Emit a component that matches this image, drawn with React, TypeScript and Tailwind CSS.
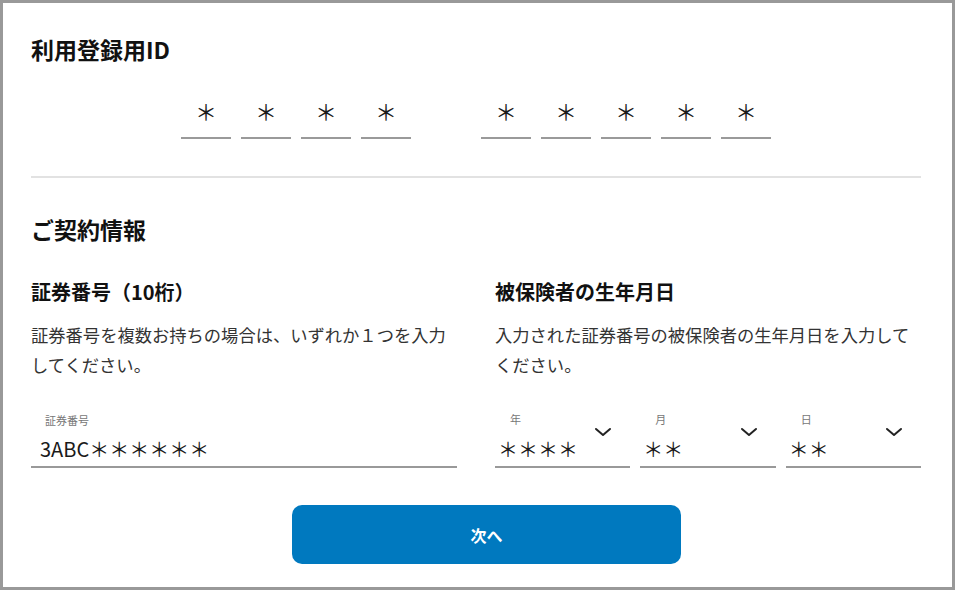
import React from "react";

const font = { fontFamily: '"Noto Sans CJK JP", "Noto Sans", sans-serif' };

function Chevron() {
  return (
    <svg width="18" height="10" viewBox="0 0 18 10" className="absolute right-[18px] top-[17px]">
      <polyline points="2,2 9,8 16,2" fill="none" stroke="#222" strokeWidth="2" strokeLinecap="round" strokeLinejoin="round" />
    </svg>
  );
}

function Box() {
  return (
    <div className="w-[50px] h-[51px] border-b-2 border-[#9a9a9a] flex items-start justify-center pt-[2px] text-[22px] leading-[40px] text-[#1a1a1a]">
      ＊
    </div>
  );
}

function Select({ label, value }: { label: string; value: string }) {
  return (
    <div className="relative flex-1 border-b-2 border-[#999] pb-[2px]">
      <div className="pl-[15px] pt-[1px] text-[11px] leading-[16px] text-[#777]">{label}</div>
      <div className="pl-[3px] mt-[7px] text-[20px] leading-[30px] text-[#1a1a1a]">{value}</div>
      <Chevron />
    </div>
  );
}

export default function App() {
  return (
    <div style={font} className="w-[955px] h-[590px] border-[3px] border-[#999] bg-white overflow-hidden">
      <div className="pl-[28px] pr-[31px] pt-[30px] flex flex-col">
        <div className="text-[23px] leading-[32px] font-bold text-[#111]">利用登録用ID</div>
        <div className="mt-[23px] flex justify-center gap-[70px]">
          <div className="flex gap-[10px]">
            <Box /><Box /><Box /><Box />
          </div>
          <div className="flex gap-[10px]">
            <Box /><Box /><Box /><Box /><Box />
          </div>
        </div>
        <div className="mt-[37px] h-[2px] bg-[#e2e2e2]" />
        <div className="mt-[35px] text-[23px] leading-[32px] font-bold text-[#111]">ご契約情報</div>
        <div className="mt-[33px] grid grid-cols-2 gap-[38px]">
          <div className="flex flex-col">
            <div className="text-[20px] leading-[28px] font-bold text-[#111]">証券番号（10桁）</div>
            <div className="mt-[14px] text-[17.3px] leading-[30px] text-[#333]">
              証券番号を複数お持ちの場合は、いずれか１つを入力
              <br />
              してください。
            </div>
            <div className="mt-[30px] border-b-2 border-[#999] pb-[2px]">
              <div className="pl-[14px] pt-[2px] text-[11px] leading-[16px] text-[#777]">証券番号</div>
              <div className="pl-[9px] mt-[6px] text-[20px] leading-[30px] text-[#1a1a1a]">3ABC＊＊＊＊＊＊</div>
            </div>
          </div>
          <div className="flex flex-col">
            <div className="text-[20px] leading-[28px] font-bold text-[#111]">被保険者の生年月日</div>
            <div className="mt-[14px] text-[17.3px] leading-[30px] text-[#333]">
              入力された証券番号の被保険者の生年月日を入力して
              <br />
              ください。
            </div>
            <div className="mt-[30px] flex gap-[10px]">
              <Select label="年" value="＊＊＊＊" />
              <Select label="月" value="＊＊" />
              <Select label="日" value="＊＊" />
            </div>
          </div>
        </div>
        <button className="mt-[37px] ml-[261px] w-[389px] h-[59px] rounded-[10px] bg-[#0079bf] text-white text-[16px] font-bold">
          次へ
        </button>
      </div>
    </div>
  );
}
